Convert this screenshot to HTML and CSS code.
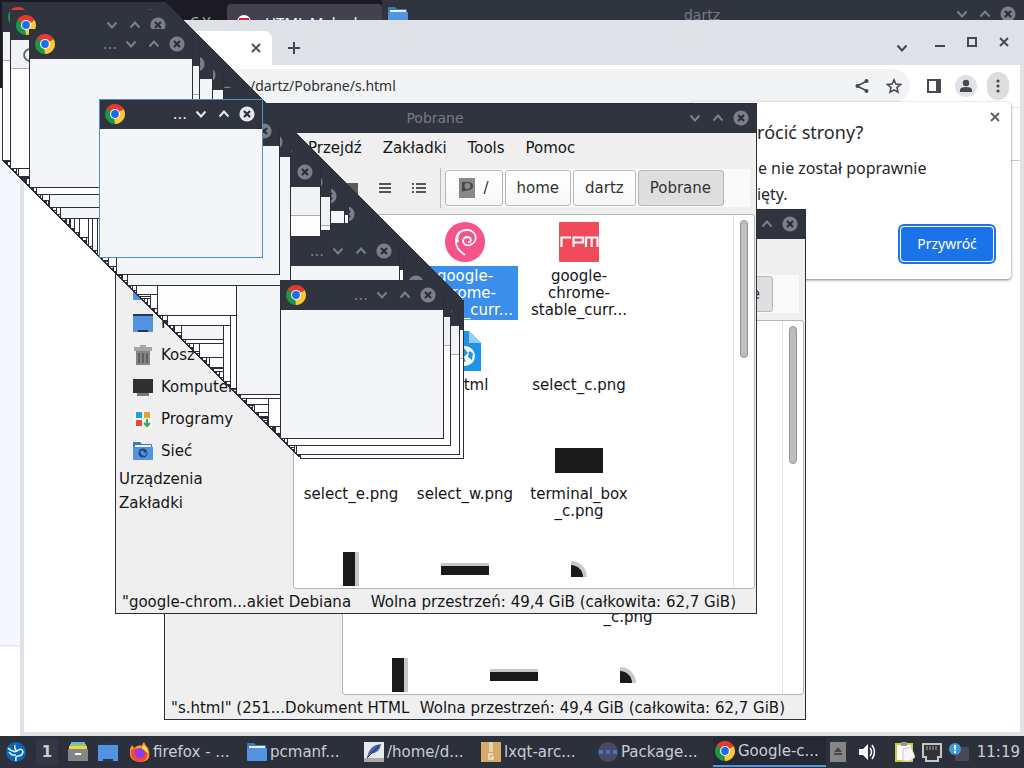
FILE: index.html
```html
<!DOCTYPE html>
<html lang="pl">
<head>
<meta charset="utf-8">
<title>Pulpit</title>
<link rel="stylesheet" href="styles.css">
</head>
<body>
<svg class="defs" aria-hidden="true">
  <symbol id="down" viewBox="0 0 12 12"><path d="M1.500 3.500 6 8.500l4.500-5" fill="none" stroke="currentColor" stroke-width="2"/></symbol>
  <symbol id="up" viewBox="0 0 12 12"><path d="M1.500 8.500 6 3.500l4.500 5" fill="none" stroke="currentColor" stroke-width="2"/></symbol>
  <symbol id="close" viewBox="0 0 16 16"><circle cx="8" cy="8" r="7.600" fill="currentColor"/><path d="m5 5 6 6m0-6-6 6" stroke="#2b2e3a" stroke-width="2.200"/></symbol>
  <symbol id="cross" viewBox="0 0 12 12"><path d="m2 2 8 8m0-8-8 8" stroke="currentColor" stroke-width="1.900"/></symbol>
  <symbol id="chrome" viewBox="0 0 20 20"><path d="M1.340 5A10 10 0 0 1 18.660 5L10 10Z" fill="#e33b2e"/><path d="M18.660 5A10 10 0 0 1 10 20L10 10Z" fill="#fcc934"/><path d="M10 20A10 10 0 0 1 1.340 5L10 10Z" fill="#1e9648"/><path d="M10 5h8.660L10 10Z" fill="#e33b2e"/><path d="m14.330 12.500L10 20l-1-7Z" fill="#fcc934"/><path d="M5.670 12.500 1.340 5 9 8Z" fill="#1e9648"/><circle cx="10" cy="10" r="5" fill="#fff"/><circle cx="10" cy="10" r="3.900" fill="#1a6fe8"/></symbol>
  <symbol id="folder" viewBox="0 0 20 20"><path d="M0 2q0-1 1-1h6l2 2h9q1 0 1 1v3H0Z" fill="#3d78bd"/><path d="M2 4h16v3H2Z" fill="#e8f0fa"/><path d="M0 6h20v12q0 1-1 1H1q-1 0-1-1Z" fill="#5294e2"/></symbol>
  <symbol id="desk" viewBox="0 0 20 20"><path d="M0 1h20v18H0Z" fill="#5294e2"/><path d="M0 1h20v2H0Z" fill="#26384e"/><path d="M5 17h10v2H5Z" fill="#26384e"/></symbol>
</svg>

<main class="desktop">
  <section class="firefox"><span class="ff-cut">C Y</span><div class="ff-tab"><svg viewBox="0 0 14 14"><circle cx="7" cy="7" r="7" fill="#fff"/><path d="M2 3h10v2H8v6H6V5H2Z" fill="#d5204c"/></svg>HTML Maked</div></section>
  <section class="back-window">
    <svg class="i20"><use href="#folder"/></svg><h2>dartz</h2>
    <div class="controls"><svg class="i12"><use href="#down"/></svg><svg class="i12"><use href="#up"/></svg><svg class="i16"><use href="#close"/></svg></div>
  </section>

  <section class="browser">
    <div class="tabs">
      <div class="tab"><button aria-label="Zamknij kartę"><svg class="i12"><use href="#cross"/></svg></button></div>
      <button class="new-tab" aria-label="Nowa karta"><svg viewBox="0 0 12 12" class="i12"><path d="M6 0v12M0 6h12" stroke="currentColor" stroke-width="2"/></svg></button>
      <div class="win-buttons">
        <button class="low" aria-label="Wyszukaj karty"><svg class="i12"><use href="#down"/></svg></button>
        <button aria-label="Minimalizuj"><svg viewBox="0 0 12 12" class="i12"><path d="M1 10h10" stroke="currentColor" stroke-width="2"/></svg></button>
        <button aria-label="Maksymalizuj"><svg viewBox="0 0 12 12" class="i12"><path d="M2 2h8v8H2Z" fill="none" stroke="currentColor" stroke-width="2"/></svg></button>
        <button aria-label="Zamknij"><svg class="i12"><use href="#cross"/></svg></button>
      </div>
    </div>
    <div class="address-row">
      <div class="omnibox">
        <input aria-label="Adres" value="/dartz/Pobrane/s.html">
        <button aria-label="Udostępnij"><svg viewBox="0 0 16 16" class="i16"><path d="M13 3 3 8l10 5" fill="none" stroke="currentColor" stroke-width="1.500"/><circle cx="12.500" cy="3" r="2" fill="currentColor"/><circle cx="3.500" cy="8" r="2" fill="currentColor"/><circle cx="12.500" cy="13" r="2" fill="currentColor"/></svg></button>
        <button aria-label="Dodaj zakładkę"><svg viewBox="0 0 16 16" class="i16"><path d="m8 1.800 1.800 4.300 4.700.4-3.600 3.100 1.100 4.600L8 11.800l-4 2.400 1.100-4.600-3.600-3.100 4.700-.4Z" fill="none" stroke="currentColor" stroke-width="1.500"/></svg></button>
      </div>
      <button aria-label="Panel boczny"><svg viewBox="0 0 16 16" class="i16"><path d="M2 2h12v12H2Z" fill="none" stroke="currentColor" stroke-width="2"/><path d="M10 2h4v12h-4Z" fill="currentColor"/></svg></button>
      <button class="avatar" aria-label="Profil"><svg viewBox="0 0 16 16" class="i16"><circle cx="8" cy="5" r="3.200" fill="currentColor"/><path d="M2 14v-2q0-3 6-3t6 3v2Z" fill="currentColor"/></svg></button>
      <button class="more" aria-label="Więcej"><svg viewBox="0 0 16 16" class="i16"><circle cx="8" cy="3" r="1.600" fill="currentColor"/><circle cx="8" cy="8" r="1.600" fill="currentColor"/><circle cx="8" cy="13" r="1.600" fill="currentColor"/></svg></button>
    </div>
    <div class="page"><div class="page-bar"></div></div>
    <aside class="restore">
      <button class="dismiss" aria-label="Zamknij"><svg class="i12"><use href="#cross"/></svg></button>
      <h1>Przywrócić strony?</h1>
      <p>Chrome nie został poprawnie zamknięty.</p>
      <button class="primary">Przywróć</button>
    </aside>
  </section>

  <section class="files second">
    <header class="titlebar"><div class="controls"><svg class="i12"><use href="#up"/></svg><svg class="i16"><use href="#close"/></svg></div></header>
    <nav class="menu"></nav>
    <div class="toolbar"><div class="path"><button class="current">Pobrane</button></div></div>
    <div class="body">
      <div class="places"></div>
      <div class="view">
        <div class="grid">
          <div class="file"></div><div class="file"></div><div class="file"></div>
          <div class="file"></div><div class="file"></div><div class="file"></div>
          <div class="file"></div><div class="file"></div><div class="file"><div class="thumb"></div><span><br>_c.png</span></div>
          <div class="file"><div class="thumb"><i class="shape-e"></i></div></div><div class="file"><div class="thumb"><i class="shape-n"></i></div></div><div class="file"><div class="thumb"><i class="shape-ne"></i></div></div>
        </div>
        <div class="scroll"><i></i></div>
      </div>
    </div>
    <footer><span>"s.html" (251...Dokument HTML</span><span>Wolna przestrzeń: 49,4 GiB (całkowita: 62,7 GiB)</span></footer>
  </section>

  <section class="files first">
    <header class="titlebar"><h2>Pobrane</h2><div class="controls"><svg class="i12"><use href="#down"/></svg><svg class="i12"><use href="#up"/></svg><svg class="i16"><use href="#close"/></svg></div></header>
    <nav class="menu"><a href="#">Przejdź</a><a href="#">Zakładki</a><a href="#">Tools</a><a href="#">Pomoc</a></nav>
    <div class="toolbar">
      <div class="modes">
        <button aria-label="Miniatury"><svg viewBox="0 0 16 16" class="i16"><path d="M1 3h14v11H1Z" fill="#5b5b5b"/></svg></button>
        <button aria-label="Lista zwarta"><svg viewBox="0 0 16 16" class="i16"><path d="M2 4h12M2 8h12M2 12h12" stroke="#555" stroke-width="1.800"/></svg></button>
        <button aria-label="Lista szczegółowa"><svg viewBox="0 0 16 16" class="i16"><path d="M1 4h2m2 0h10M1 8h2m2 0h10M1 12h2m2 0h10" stroke="#555" stroke-width="1.800"/></svg></button>
      </div>
      <div class="path">
        <button><svg viewBox="0 0 16 20" width="16" height="20"><path d="M0 0h16v20H0Z" fill="#888"/><path d="M3 14V4h7q4 1 4 4t-4 4q-3 1-5 1Z" fill="#484848"/><circle cx="8.500" cy="8" r="3" fill="#888"/></svg>/</button>
        <button>home</button><button>dartz</button><button class="current">Pobrane</button>
      </div>
    </div>
    <div class="body">
      <div class="places">
        <a href="#"><svg class="i20"><use href="#folder"/></svg></a>
        <a href="#"><svg class="i20"><use href="#desk"/></svg>Pulpit</a>
        <a href="#"><svg viewBox="0 0 20 20" class="i20"><path d="M1 2h6V0h6v2h6v4H1Z" fill="#a5a5a5"/><path d="M3 6h14v14H3Z" fill="#858585"/><path d="M6 8v10m4-10v10m4-10v10" stroke="#555" stroke-width="1.500"/></svg>Kosz</a>
        <a href="#"><svg viewBox="0 0 20 20" class="i20"><path d="M0 2h20v14H0Z" fill="#303030"/><path d="M4 16h12v3H4Z" fill="#777"/></svg>Komputer</a>
        <a href="#"><svg viewBox="0 0 20 20" class="i20"><path d="M1 0h18v20H1Z" fill="#f4f4f4"/><path d="M3 3h6v6H3Z" fill="#1da1e8"/><path d="M11 3h6v6h-6Z" fill="#eba033"/><path d="M3 11h6v6H3Z" fill="#e64b35"/><path d="M14 10v6m-3-2 3 3 3-3" stroke="#36a852" stroke-width="2" fill="none"/></svg>Programy</a>
        <a href="#"><svg viewBox="0 0 20 20" class="i20"><use href="#folder"/><circle cx="10" cy="12" r="4.500" fill="#20486f"/><path d="m7 11 3-2 1 3 3-1-2 4-3-1Z" fill="#5294e2"/></svg>Sieć</a>
        <h3>Urządzenia</h3>
        <h3>Zakładki</h3>
      </div>
      <div class="view">
        <div class="grid">
          <div class="file"></div>
          <div class="file selected"><div class="thumb"><svg viewBox="0 0 40 40" width="40" height="40"><circle cx="20" cy="20" r="20" fill="#f8528b"/><path d="M20 33C7 25 8 8 22 8c10 0 12 12 3 15-7 2-10-7-3-8m-9 5C11 15 14 8 21 8m1 7c5 0 5 6 1 5" fill="none" stroke="#fff" stroke-width="1.800"/></svg></div><span>google-<br>chrome-<br>stable_curr...</span></div>
          <div class="file"><div class="thumb"><svg viewBox="0 0 40 40" width="40" height="40"><rect width="40" height="40" rx="1" fill="#f04a5b"/><path d="M2.500 25V15.500H12M14.500 20.500H24v-5h-9.500V25M27 25v-9.500h11.500V25M32.700 15.500V25" fill="none" stroke="#fff" stroke-width="2.200"/></svg></div><span>google-<br>chrome-<br>stable_curr...</span></div>
          <div class="file"></div>
          <div class="file"><div class="thumb"><svg viewBox="0 0 32 40" width="32" height="40"><path d="M0 0h20l12 12v28H0Z" fill="#1e93ea"/><path d="M20 0v12h12Z" fill="#93cef7"/><circle cx="16" cy="25" r="10" fill="#fff"/><path d="m8 24 7-7 4 5-4 4 2 5-5-1Zm12-4 4 2-1 7-4-3Z" fill="#1e93ea"/></svg></div><span>s.html</span></div>
          <div class="file"><div class="thumb"></div><span>select_c.png</span></div>
          <div class="file"><div class="thumb"></div><span>select_e.png</span></div>
          <div class="file"><div class="thumb"></div><span>select_w.png</span></div>
          <div class="file"><div class="thumb"><i class="shape-box"></i></div><span>terminal_box<br>_c.png</span></div>
          <div class="file"><div class="thumb"><i class="shape-e"></i></div></div>
          <div class="file"><div class="thumb"><i class="shape-n"></i></div></div>
          <div class="file"><div class="thumb"><i class="shape-ne"></i></div></div>
        </div>
        <div class="scroll"><i></i></div>
      </div>
    </div>
    <footer><span>"google-chrom...akiet Debiana</span><span>Wolna przestrzeń: 49,4 GiB (całkowita: 62,7 GiB)</span></footer>
  </section>

  <div id="cascade"></div>
</main>

<footer class="taskbar">
  <button class="start" aria-label="Menu"><svg viewBox="0 0 20 20" class="i20"><circle cx="10" cy="10" r="10" fill="#0b66b5"/><path d="M2 6q5 5 9 3 5-4 6 1-1 4-5 4-3 0-2 5M3 10q3 4 7 3M9 3q-1 4 2 6" fill="none" stroke="#d9f0ff" stroke-width="1.600"/></svg></button>
  <button class="space">1</button>
  <button aria-label="Pliki"><svg viewBox="0 0 20 20" class="i20"><path d="M3 0h14v3H3Z" fill="#61b8e8"/><path d="M2 2h16v3H2Z" fill="#8fc95c"/><path d="M1 4h18v4H1Z" fill="#f0cf55"/><path d="M0 7h20v12H0Z" fill="#858585"/><path d="M7 11h6v2H7Z" fill="#fff"/></svg></button>
  <button aria-label="Pokaż pulpit"><svg class="i20"><use href="#desk"/></svg></button>
  <div class="tasks">
    <button><svg viewBox="0 0 20 20" class="i20"><path d="M14 0q1 3 4 6 5 14-8 14Q-2 19 0 7l2-4 2 3q5-4 8-2 0-2 2-4Z" fill="#ff9a28"/><path d="M1 8q4-3 8-1l9 4q-1 9-9 9Q0 18 1 8Z" fill="#f4433c"/><circle cx="10" cy="11" r="5" fill="#8a3fe0"/><path d="M13 3q5 3 5 9-3-5-6-5Z" fill="#ffe14d"/></svg>firefox - ...</button>
    <button><svg class="i20"><use href="#folder"/></svg>pcmanf...</button>
    <button><svg viewBox="0 0 20 20" class="i20"><path d="M0 0h20v20H0Z" fill="#e6eaec"/><path d="M0 16h20v4H0Z" fill="#aaa"/><path d="M3 16q2-13 14-14-1 9-11 10" fill="#4a5da5"/><path d="M3 16 15 4" stroke="#222c4f"/></svg>/home/d...</button>
    <button><svg viewBox="0 0 20 20" class="i20"><path d="M0 0h20v20H0Z" fill="#d5ab6c"/><path d="M8 0h4v10H8Z" fill="#ead2aa"/><path d="M12 12H8v5h4v-2h-2" fill="none" stroke="#f4e6ce" stroke-width="1.500"/></svg>lxqt-arc...</button>
    <button><svg viewBox="0 0 20 20" class="i20"><circle cx="10" cy="10" r="10" fill="#4b4861"/><path d="M1 10h18" stroke="#3c76c7" stroke-width="4" stroke-dasharray="4 3"/></svg>Package...</button>
    <button class="active"><svg class="i20"><use href="#chrome"/></svg>Google-c...</button>
  </div>
  <div class="tray">
    <svg viewBox="0 0 16 20" width="16" height="20"><path d="M0 0h16v20H0Z" fill="#858585"/><path d="m8 5 4 5H4Zm-4 6h8v2H4Z" fill="#484848"/></svg>
    <svg viewBox="0 0 18 18" width="18" height="18"><path d="M1 6h4l5-5v16l-5-5H1Z" fill="#fff"/><path d="M12 5q3 4 0 8m2-11q5 7 0 14" fill="none" stroke="#fff" stroke-width="1.500"/></svg>
    <svg viewBox="0 0 20 20" class="i20 clip"><path d="M1 2h16v17H1Z" fill="#fff" stroke="#c9cf38" stroke-width="2"/><path d="M6 0h6v4H6Z" fill="#999"/><path d="m8 7 8-2 4 10-5 4H8Z" fill="#f7f7f7" stroke="#ccc"/></svg>
    <svg viewBox="0 0 20 20" class="i20"><path d="M1 2h18v13h-3v4H4v-4H1Z" fill="#333" stroke="#c5c5c5" stroke-width="2"/><path d="M5 4v4m3-4v4m3-4v4m3-4v4" stroke="#aaa"/></svg>
    <svg viewBox="0 0 20 20" class="i20"><path d="M6 5h14v14H6Z" fill="#474a56"/><circle cx="6" cy="7" r="6" fill="#3a9be2"/><path d="M6 3v5m0 1v2" stroke="#fff" stroke-width="2"/></svg>
  </div>
  <time>11:19</time>
</footer>
<script src="cascade.js"></script>
</body>
</html>
```
FILE: styles.css
```css
* { box-sizing: border-box; }
html, body { height: 100%; }
body { margin: 0; display: flex; flex-direction: column; overflow: hidden; background: #2c303b; font: 15px/20px "DejaVu Sans", "Noto Sans", sans-serif; color: #151515; }
button { border: 0; padding: 0; background: none; font: inherit; color: inherit; display: flex; align-items: center; justify-content: center; }
a { color: inherit; text-decoration: none; }
h1, h2, h3, p { margin: 0; font-weight: 400; }
svg { display: block; flex: none; }
.defs { display: none; }
.i12 { width: 12px; height: 12px; }
.i16 { width: 16px; height: 16px; }
.i20 { width: 20px; height: 20px; }

.desktop { position: relative; flex: 1; min-height: 0; overflow: hidden; background: linear-gradient(#1c1b22 88px, #f4f8fc 88px, #f4f8fc 645px, #dadce0 645px, #fff 647px); }
.firefox { position: absolute; top: 0; left: 0; width: 382px; height: 88px; background: #1c1b22; color: #ddd; display: flex; align-items: flex-start; padding: 4px 0 0 190px; font-family: "Noto Sans", sans-serif; }
.ff-cut { width: 37px; padding-top: 8px; color: #aaa; font-size: 14px; white-space: nowrap; }
.ff-tab { flex: 1; display: flex; gap: 14px; padding: 8px 10px 0; height: 40px; background: #42414d; border-radius: 4px 4px 0 0; color: #fbfbfe; font-size: 15px; }
.ff-tab svg { width: 14px; height: 14px; margin-top: 3px; }
.back-window { position: absolute; top: 0; left: 382px; right: 0; height: 40px; background: #2f343f; display: flex; align-items: flex-start; padding: 6px 8px 0 6px; color: #767b87; }
.back-window h2 { flex: 1; text-align: center; padding-left: 40px; font-size: 14px; line-height: 18px; }
.controls { display: flex; align-items: center; gap: 11px; color: #7b7f89; }
.controls .i16 { margin-left: -2px; }
.browser { position: absolute; inset: 20px 0 0 20px; display: flex; flex-direction: column; background: #dee1e6; padding: 0 4px 4px; color: #45494d; }
.tabs { display: flex; align-items: flex-end; height: 45px; }
.tab { width: 248px; height: 34px; display: flex; justify-content: flex-end; align-items: center; padding-right: 10px; border-radius: 8px 8px 0 0; background: #fff; }
.new-tab { height: 34px; margin-left: 16px; }
.win-buttons { margin-left: auto; display: flex; align-self: flex-start; align-items: flex-start; gap: 20px; padding: 16px 10px 0 0; }
.win-buttons .low { padding: 6px 6px 0 0; }
.address-row { display: flex; align-items: center; height: 43px; gap: 16px; padding: 0 14px 0 40px; background: #fff; border-bottom: 1px solid #e4e6e8; }
.omnibox { flex: 1; height: 34px; display: flex; align-items: center; gap: 16px; padding: 0 8px 0 186px; border-radius: 17px; background: #f1f3f4; }
.omnibox input { flex: 1; min-width: 0; border: 0; padding: 0; background: none; font: 14px/20px "Noto Sans", sans-serif; color: #303236; }
.avatar { border-radius: 50%; box-shadow: 0 0 0 3px #dee3ea; background: #dee3ea; }
.more { width: 22px; height: 28px; margin: 0 -3px; border-radius: 11px; background: #ddd; }
.page { flex: 1; background: #fff; }
.page-bar { height: 53px; border-bottom: 1px solid #c9cbd0; }
.restore { position: absolute; top: 82px; right: 13px; width: 320px; padding: 19px 17px 17px 16px; border-radius: 4px; background: #fff; box-shadow: 0 1px 3px #00000080; font: 16px/26px "Noto Sans", sans-serif; color: #26282b; display: flex; flex-direction: column; }
.restore h1 { font-size: 18px; line-height: 22px; margin-bottom: 12px; }
.restore p { padding-right: 60px; }
.dismiss { position: absolute; top: 9px; right: 10px; color: #5c5f63; }
.primary { align-self: flex-end; width: 94px; height: 36px; margin-top: 19px; border: 1px solid #fff; border-radius: 4px; background: #1a73e8; outline: 2px solid #1a73e8; color: #fff; font-size: 14px; }

.files { position: absolute; width: 642px; height: 511px; display: flex; flex-direction: column; border: 1px solid #2b2e3a; background: #efefef; }
.first { left: 115px; top: 103px; }
.second { left: 164px; top: 209px; }
.titlebar { display: flex; align-items: center; height: 29px; padding: 0 7px 1px; background: #2f343f; color: #767b87; }
.titlebar h2 { flex: 1; text-align: center; font-size: 14px; padding-left: 58px; }
.titlebar .controls { margin-left: auto; }
.menu { height: 30px; display: flex; align-items: center; gap: 21px; padding-left: 192px; }
.toolbar { height: 50px; display: flex; align-items: center; justify-content: flex-end; padding: 0 6px 0 0; }
.modes { display: flex; gap: 18px; padding: 12px 13px 12px 0; border-right: 1px solid #bbb; margin-right: 4px; }
.path { display: flex; align-items: center; gap: 2px; height: 38px; padding-right: 26px; background: #fafafa; }
.path button { height: 36px; padding: 0 11px; gap: 8px; border: 1px solid #b8b8b8; border-radius: 3px; background: linear-gradient(#fff, #f7f7f7); color: #333; }
.path button:first-child:has(svg) { padding: 0 13px; }
.path button.current { padding: 0 12px 0 11px; background: #dedede; }
.body { flex: 1; min-height: 0; display: flex; }
.places { width: 177px; padding: 62px 0 0 17px; }
.places a { display: flex; align-items: center; gap: 8px; height: 32px; }
.places h3 { margin-left: -14px; font-size: 15px; line-height: 24px; }
.view { flex: 1; display: flex; margin: 1px 1px 0 0; border: 1px solid #b5b5b5; border-radius: 3px; background: #fff; overflow: hidden; }
.grid { flex: 1; display: grid; grid-template-columns: repeat(3, 114px); grid-auto-rows: 109px; padding-top: 3px; }
.file { padding: 0 4px; text-align: center; line-height: 17px; }
.thumb { height: 48px; display: flex; align-items: center; justify-content: center; }
.file span { display: block; padding: 2px 0 1px; }
.selected span { background: #3b8ee9; color: #fff; }
.shape-box { width: 48px; height: 25px; background: #1a1a1a; }
.shape-e { width: 16px; height: 34px; background: #1a1a1a; border-right: 4px solid #c8c8c8; }
.shape-n { width: 48px; height: 12px; background: #1a1a1a; border-top: 3px solid #c8c8c8; }
.shape-ne { width: 16px; height: 16px; background: #1a1a1a; border: solid #c8c8c8; border-width: 4px 4px 0 0; border-radius: 0 16px 0 0; }
.scroll { width: 21px; padding: 5px 6px; border-left: 1px solid #e3e3e3; }
.scroll i { display: block; height: 138px; width: 8px; border: 1px solid #979797; border-radius: 4px; background: #bdbdbd; }
.files > footer { display: flex; justify-content: space-between; height: 24px; padding: 3px 20px 1px 6px; white-space: nowrap; }

.mini { position: absolute; width: 164px; height: 159px; border: 1px solid #2b2e3a; border-top: 30px solid #2f343f; background: #fdfdff; }
.mini-head { display: flex; align-items: center; height: 28px; margin: -29px 0 1px; padding: 0 7px 0 5px; color: #7b7f89; }
.mini-head span { margin: 0 8px 0 auto; }
.mini-head .controls { margin-left: auto; color: inherit; }
.mini-head span + .controls { margin-left: 0; }
.flat { background: #f3f5f8; }
.bar::after { content: ""; display: block; height: 28px; background: #f1f2f4; border-bottom: 1px solid #a9abb0; }
.mini.focus { border-color: #4d8fca; border-top-width: 1px; }
.focus .mini-head { height: 29px; margin: 0; padding-bottom: 1px; background: #2f343f; color: #e4e8ef; }
.reload { position: absolute; left: 11px; top: 7px; color: #666; }

.taskbar { display: flex; align-items: center; height: 32px; padding: 0 4px 0 6px; background: #2c303b; color: #c8cdd6; }
.taskbar > button { margin-right: 10px; }
.taskbar .space { width: 22px; height: 26px; background: #343845; font-weight: 700; }
.tasks { flex: 1; display: flex; }
.tasks button { flex: 0 1 117px; height: 30px; justify-content: flex-start; gap: 3px; padding: 0 2px; white-space: nowrap; }
.tasks .active { flex-basis: 113px; border-bottom: 2px solid #5294e2; background: #252934; }
.tray { display: flex; align-items: center; gap: 7px; margin-right: 8px; }
.tray svg:nth-child(2) { margin-left: 5px; }
.tray .clip { margin-left: 12px; }
```
FILE: cascade.js
```js
// Builds the pile of small browser windows that runs diagonally over the desktop.
const pile = document.getElementById("cascade");
const icon = (name, size) => `<svg class="i${size}"><use href="#${name}"/></svg>`;

function addWindow(offset, kind, detailed, named) {
  const win = document.createElement("div");
  win.className = "mini " + kind;
  win.style.left = offset + "px";
  win.style.top = offset + "px";
  if (detailed) {
    win.innerHTML = `<div class="mini-head">${icon("chrome", 20)}${named ? "<span>...</span>" : ""}` +
      `<div class="controls">${icon("down", 12)}${icon("up", 12)}${icon("close", 16)}</div></div>`;
  }
  pile.append(win);
  return win;
}

// Background windows, one per step, stacked in a repeatable shuffled order.
const steps = Array.from({ length: 297 }, (_, i) => i + 2);
let seed = 41;
for (let i = steps.length - 1; i > 0; i--) {
  seed = (seed * 1103515245 + 12345) % 2147483648;
  const j = seed % (i + 1);
  [steps[i], steps[j]] = [steps[j], steps[i]];
}
steps.forEach(offset => addWindow(offset, "", false));

// Front windows, lowest first.
const front = [
  [66, ""], [69, ""], [70, ""], [74, ""], [79, ""], [88, ""], [92, ""], [97, ""],
  [150, ""], [136, ""],
  [300, "bar"], [296, "bar"], [287, "bar"],
  [275, ""], [254, ""], [246, ""], [268, ""], [240, ""],
  [199, ""], [185, ""], [181, "flat"], [223, ""], [167, "bar"], [230, ""], [157, "bar"],
  [236, "flat", true],
  [60, "flat"], [49, "flat"], [36, "bar"],
  [2, "bar"], [10, "bar"], [29, "flat", true],
  [127, "flat"], [116, "flat"], [280, "flat", true], [99, "flat focus", true]
];
front.forEach(([offset, kind, named]) => {
  const win = addWindow(offset, kind, true, named);
  if (offset === 10) {
    win.insertAdjacentHTML("beforeend", '<svg class="reload i16" viewBox="0 0 16 16"><path d="M13 4.500A6 6 0 1 0 14 9" fill="none" stroke="currentColor" stroke-width="2"/></svg>');
  }
});
```
